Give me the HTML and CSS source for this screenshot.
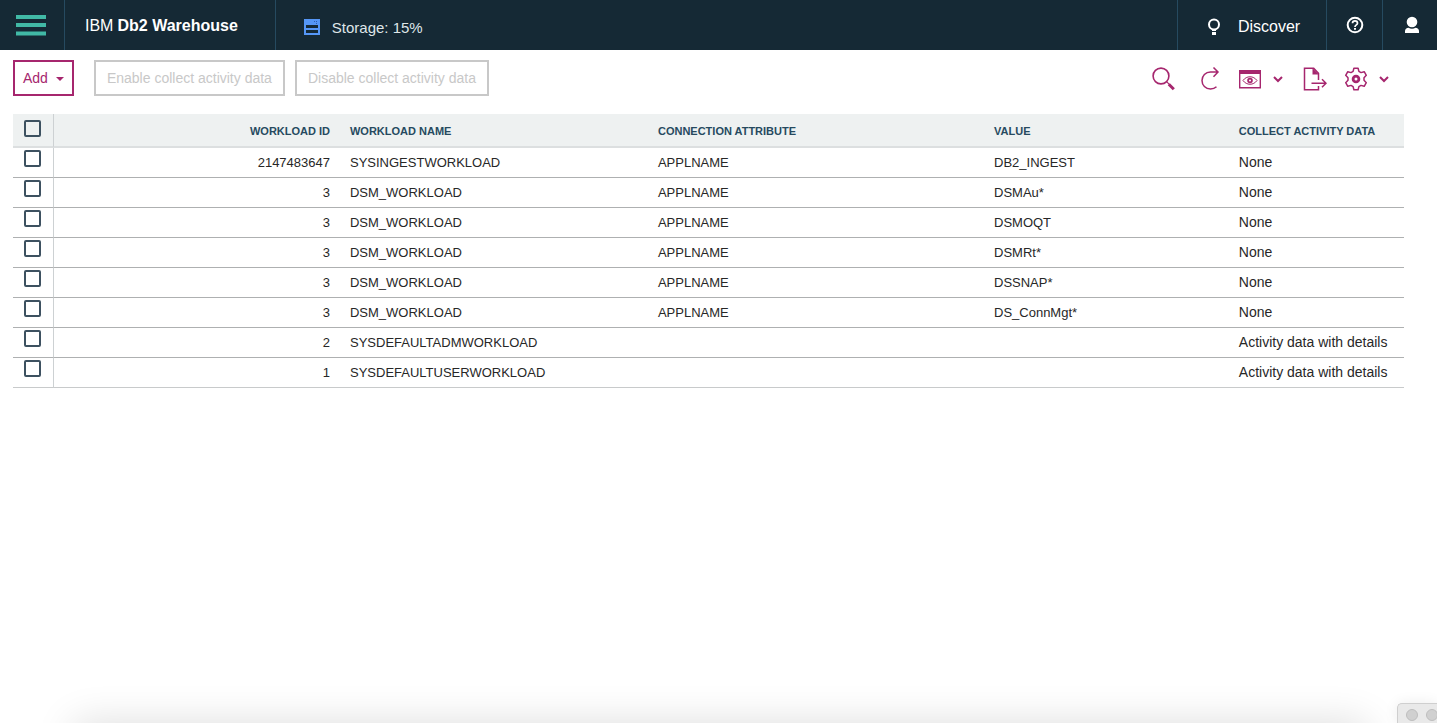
FILE: index.html
```html
<!DOCTYPE html>
<html lang="en">
<head>
<meta charset="utf-8">
<title>IBM Db2 Warehouse</title>
<link rel="stylesheet" href="styles.css">
</head>
<body>
<header class="topbar">
  <button class="menu-btn" type="button" aria-label="Menu">
    <svg width="32" height="22" viewBox="0 0 32 22"><path d="M1 3h30M1 11h30M1 19.500h30" stroke="#41b9a6" stroke-width="4" fill="none"/></svg>
  </button>
  <div class="brand">IBM <b>Db2 Warehouse</b></div>
  <div class="storage">
    <svg width="16" height="16" viewBox="0 0 16 16"><rect width="16" height="16" fill="#5596f6"/><path d="M2 6h12v3H2zM2 11h12v3H2z" fill="#152935"/><path d="M10 2h1v1h-1zM12 2h1v1h-1zM12 4h1v1h-1z" fill="#2f5fae"/></svg>
    <span>Storage: 15%</span>
  </div>
  <button class="top-btn discover" type="button">
    <svg width="14" height="18" viewBox="0 0 14 18"><circle cx="7" cy="6.500" r="5" fill="none" stroke="#fff" stroke-width="2"/><path d="M5 11h4v2H5zM5 14h4v3H5z" fill="#fff"/></svg>
    <span>Discover</span>
  </button>
  <button class="top-btn help" type="button" aria-label="Help">
    <svg width="18" height="18" viewBox="0 0 18 18" fill="none" stroke="#fff" stroke-width="2"><circle cx="9" cy="9" r="7.300"/><path d="M6.500 7.300c0-3.200 5-3.200 5 0 0 1.700-2.500 1.500-2.500 3.700" stroke-width="1.700"/><path d="M9 12v1.700"/></svg>
  </button>
  <button class="top-btn user" type="button" aria-label="Account">
    <svg width="14" height="18" viewBox="0 0 14 18" fill="#fff"><circle cx="7" cy="6" r="5.300"/><path d="M0 17v-2c0-2 1.500-3 3.500-3.200 2 1.300 5 1.300 7 0C12.500 12 14 13 14 15v2z"/></svg>
  </button>
</header>

<main class="page">
  <div class="toolbar">
    <button class="btn add" type="button"><span>Add</span>
      <svg width="8" height="6" viewBox="0 0 8 6"><path d="M0 2h8L4 6z" fill="#a6266e"/></svg>
    </button>
    <button class="btn" type="button" disabled>Enable collect activity data</button>
    <button class="btn" type="button" disabled>Disable collect activity data</button>
    <div class="tools">
      <button class="icon-btn search" type="button" aria-label="Search">
        <svg width="24" height="24" viewBox="0 0 24 24" fill="none" stroke="#a6266e"><circle cx="9" cy="9" r="7.900" stroke-width="1.600"/><path d="M14.800 14.800l2.500 2.500" stroke-width="1.200"/><path d="M16.800 17.300l5 5" stroke-width="3"/></svg>
      </button>
      <button class="icon-btn refresh" type="button" aria-label="Refresh">
        <svg width="24" height="24" viewBox="0 0 24 24" fill="none" stroke="#a6266e" stroke-width="1.500"><path d="M20 5H12.500C7.500 5 4 8.800 4 13.500S7.500 22 12.500 22c2.500 0 4.500-.8 6-2.200M15.500.500L20 5l-4.500 4.800"/></svg>
      </button>
      <button class="icon-btn view" type="button" aria-label="View">
        <svg width="24" height="24" viewBox="0 0 24 24" fill="none" stroke="#a6266e"><path d="M1.700 3.700h20.600v17H1.700z" stroke-width="1.400"/><path d="M1 3h22v4H1z" fill="#a6266e" stroke="none"/><path d="M5 13.500c3.500-5 10.500-5 14 0-3.500 5-10.500 5-14 0z" stroke-width="1"/><circle cx="12" cy="13.500" r="1.900" stroke-width="1.800"/></svg>
        <svg width="10" height="7" viewBox="0 0 10 7"><path d="M1 1l4 4 4-4" fill="none" stroke="#a6266e" stroke-width="2"/></svg>
      </button>
      <button class="icon-btn export" type="button" aria-label="Export">
        <svg width="24" height="24" viewBox="0 0 24 24" fill="none" stroke="#a6266e" stroke-width="1.500"><path d="M15.500 19v3.700h-14V1.200h9.200l4.800 5V13"/><path d="M9.500 1v6.500h6.500z" fill="#a6266e" stroke="none"/><path d="M8.500 16.300h14M19 12.300l4 4-4 4"/></svg>
      </button>
      <button class="icon-btn settings" type="button" aria-label="Settings">
        <svg width="24" height="24" viewBox="0 0 24 24" fill="none" stroke="#a6266e"><path d="M9.900 1.200h4.200l.8 3.200 2.100 1.200 3.200-.9 2.100 3.600-2.300 2.400v2.600l2.300 2.400-2.100 3.600-3.200-.9-2.100 1.200-.8 3.200H9.900l-.8-3.200L7 18.400l-3.200.9-2.100-3.600L4 13.300v-2.600L1.700 8.300l2.100-3.600 3.200.9 2.100-1.200z" stroke-width="1.500" stroke-linejoin="round"/><circle cx="12" cy="12" r="2.900" stroke-width="2.800"/></svg>
        <svg width="10" height="7" viewBox="0 0 10 7"><path d="M1 1l4 4 4-4" fill="none" stroke="#a6266e" stroke-width="2"/></svg>
      </button>
    </div>
  </div>

  <table class="grid">
    <colgroup><col class="c-check"><col class="c-id"><col class="c-name"><col class="c-attr"><col class="c-value"><col class="c-collect"></colgroup>
    <thead>
      <tr><th class="check"><input type="checkbox" aria-label="Select all"></th><th class="num">WORKLOAD ID</th><th>WORKLOAD NAME</th><th>CONNECTION ATTRIBUTE</th><th>VALUE</th><th>COLLECT ACTIVITY DATA</th></tr>
    </thead>
    <tbody>
      <tr><td class="check"><input type="checkbox" aria-label="Select row 1"></td><td class="num">2147483647</td><td>SYSINGESTWORKLOAD</td><td>APPLNAME</td><td>DB2_INGEST</td><td class="collect">None</td></tr>
      <tr><td class="check"><input type="checkbox" aria-label="Select row 2"></td><td class="num">3</td><td>DSM_WORKLOAD</td><td>APPLNAME</td><td>DSMAu*</td><td class="collect">None</td></tr>
      <tr><td class="check"><input type="checkbox" aria-label="Select row 3"></td><td class="num">3</td><td>DSM_WORKLOAD</td><td>APPLNAME</td><td>DSMOQT</td><td class="collect">None</td></tr>
      <tr><td class="check"><input type="checkbox" aria-label="Select row 4"></td><td class="num">3</td><td>DSM_WORKLOAD</td><td>APPLNAME</td><td>DSMRt*</td><td class="collect">None</td></tr>
      <tr><td class="check"><input type="checkbox" aria-label="Select row 5"></td><td class="num">3</td><td>DSM_WORKLOAD</td><td>APPLNAME</td><td>DSSNAP*</td><td class="collect">None</td></tr>
      <tr><td class="check"><input type="checkbox" aria-label="Select row 6"></td><td class="num">3</td><td>DSM_WORKLOAD</td><td>APPLNAME</td><td>DS_ConnMgt*</td><td class="collect">None</td></tr>
      <tr><td class="check"><input type="checkbox" aria-label="Select row 7"></td><td class="num">2</td><td>SYSDEFAULTADMWORKLOAD</td><td></td><td></td><td class="collect">Activity data with details</td></tr>
      <tr><td class="check"><input type="checkbox" aria-label="Select row 8"></td><td class="num">1</td><td>SYSDEFAULTUSERWORKLOAD</td><td></td><td></td><td class="collect">Activity data with details</td></tr>
    </tbody>
  </table>
</main>

<div class="edge-shadow"></div>
<div class="corner-window"><i></i><i></i></div>
</body>
</html>
```
FILE: styles.css
```css
* { box-sizing: border-box; }

body {
  margin: 0;
  min-height: 100vh;
  overflow: hidden;
  background: #fff;
  color: #272727;
  font-family: "Liberation Sans", Arial, sans-serif;
}

button {
  margin: 0;
  padding: 0;
  border: 0;
  background: none;
  font-family: inherit;
}

svg { display: block; flex: none; }

/* Top bar */
.topbar {
  display: flex;
  height: 50px;
  background: #152935;
  color: #fff;
  font-size: 16px;
}

.menu-btn {
  width: 65px;
  padding-left: 15px;
  border-right: 1px solid #264a60;
}

.brand {
  display: flex;
  align-items: center;
  gap: 4px;
  padding: 2px 37px 0 20px;
  border-right: 1px solid #264a60;
}

.storage {
  display: flex;
  align-items: center;
  gap: 12px;
  padding: 4px 0 0 28px;
  margin-right: auto;
  color: #dfe6e9;
  font-size: 15px;
}

.top-btn {
  display: flex;
  align-items: center;
  justify-content: center;
  border-left: 1px solid #264a60;
  color: #fff;
  font-size: 16px;
}

.discover { width: 149px; gap: 17px; padding: 3px 0 0 3px; }
.help { width: 56px; }
.user { width: 55px; padding-left: 4px; }

/* Toolbar */
.toolbar {
  display: flex;
  align-items: center;
  gap: 10px;
  padding: 10px 48px 18px 13px;
}

.btn {
  height: 36px;
  padding: 0 11px;
  border: 2px solid #c8c8c8;
  background: #fff;
  color: #c8c8c8;
  font-size: 14px;
  white-space: nowrap;
}

.add {
  display: flex;
  align-items: center;
  gap: 8px;
  margin-right: 10px;
  padding: 0 8px;
  border-color: #a6266e;
  color: #a6266e;
}

.tools { display: flex; align-items: center; margin-left: auto; padding-top: 2px; }
.icon-btn { display: flex; align-items: center; gap: 11px; height: 24px; }
.refresh { margin-left: 22px; }
.view { margin-left: 16px; }
.export { margin-left: 20px; }
.settings { margin-left: 17px; }

/* Workload table */
.grid {
  width: calc(100% - 46px);
  margin-left: 13px;
  table-layout: fixed;
  border-collapse: separate;
  border-spacing: 0;
}

.c-check { width: 41px; }
.c-id { width: 20.56%; }
.c-name { width: 22.14%; }
.c-attr { width: 24.16%; }
.c-value { width: 17.6%; }

.grid th,
.grid td {
  height: 30px;
  padding: 0 10px;
  border-bottom: 1px solid #aeb0b1;
  text-align: left;
  white-space: nowrap;
  font-size: 13px;
}

.grid th {
  height: 34px;
  padding-top: 2px;
  border-bottom: 2px solid #dcdfe0;
  background: #eef1f1;
  color: #264a60;
  font-size: 11px;
}

.grid .num { text-align: right; }
.grid .collect { padding-bottom: 2px; font-size: 14px; }

.grid .check {
  padding: 2px 0 0 11px;
  border-right: 1px solid #cdd1d3;
  vertical-align: top;
}

.grid th.check { padding-top: 6px; }
.grid tbody tr:last-child td { border-bottom-color: #c8cacb; }

.check input {
  display: block;
  appearance: none;
  width: 17px;
  height: 17px;
  margin: 0;
  border: 2px solid #3d5160;
  border-radius: 2px;
  background: transparent;
}

/* Neighbouring desktop windows at the bottom edge */
.edge-shadow {
  position: fixed;
  right: 70px;
  bottom: -40px;
  left: 74px;
  height: 40px;
  box-shadow: 0 0 40px rgba(0, 0, 0, 0.14);
}

.corner-window {
  position: fixed;
  right: 0;
  bottom: 0;
  display: flex;
  gap: 8px;
  width: 40px;
  height: 20px;
  padding: 5px 0 0 8px;
  overflow: hidden;
  border: 1px solid #cfcfcf;
  border-width: 1px 0 0 1px;
  border-radius: 5px 0 0 0;
  background: #e9e9e9;
  box-shadow: 0 0 14px rgba(0, 0, 0, 0.08);
}

.corner-window i {
  flex: none;
  width: 12px;
  height: 12px;
  border: 1px solid #bebebe;
  border-radius: 50%;
  background: #d0d0d0;
}
```
